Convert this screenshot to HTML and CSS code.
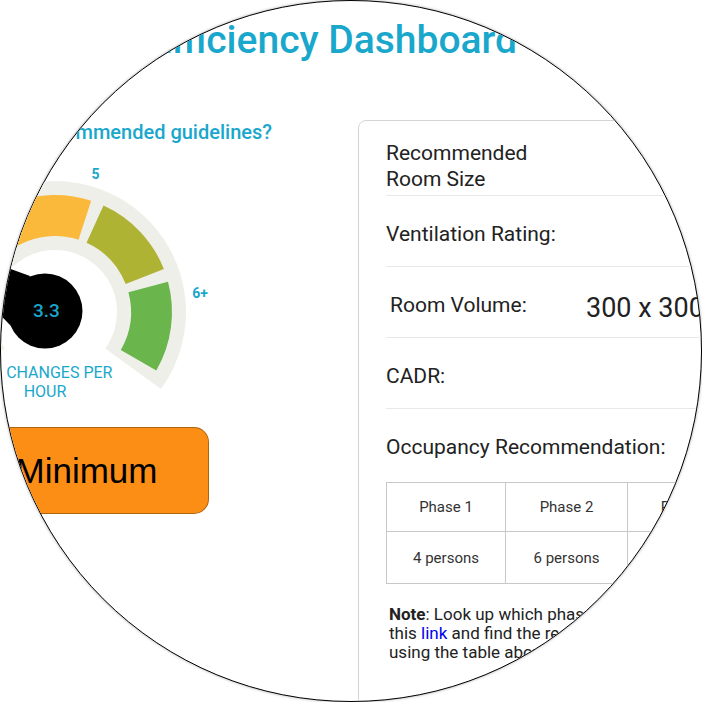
FILE: index.html
```html
<!DOCTYPE html>
<html>
<head>
    <link rel="stylesheet" href="styles.css">
</head>
<body>
<div class="lens">
    <div class="page">
        <h1 class="title">Ventilation Efficiency Dashboard</h1>

        <div class="main">
            <div class="gauge-col">
                <h2 class="question">Does your room meet the recommended guidelines?</h2>

                <svg class="gauge" viewBox="-113 160 340 245" width="340" height="245">
                    <path class="track" d="M-51 389A131 131 0 1 1 161 389L105.2 348.4A62 62 0 1 0 4.8 348.4Z"/>
                    <path class="seg-red" d="M-46.3 370.5A117 117 0 0 1 -52.3 265.4L-14.7 281.7A76 76 0 0 0 -10.8 350Z"/>
                    <path class="seg-orange" d="M-46.3 253.5A117 117 0 0 1 91.2 200.7L78.5 239.7A76 76 0 0 0 -10.8 274Z"/>
                    <path class="seg-olive" d="M103.5 205.5A117 117 0 0 1 163.9 269.1L125.7 284.1A76 76 0 0 0 86.5 242.8Z"/>
                    <path class="seg-green" d="M168 281.7A117 117 0 0 1 156.3 370.5L120.8 350A76 76 0 0 0 128.4 292.3Z"/>
                    <polygon class="needle" points="-75,238 30,276 10,325"/>
                    <circle class="needle" cx="45" cy="311" r="37.5"/>
                    <text class="gauge-value" x="46.5" y="317">3.3</text>
                    <text class="gauge-tick" x="95.5" y="179">5</text>
                    <text class="gauge-tick" x="200" y="298">6+</text>
                    <text class="gauge-caption"><tspan x="45" y="378">AIR CHANGES PER</tspan><tspan x="45" y="397">HOUR</tspan></text>
                </svg>

                <div class="rating">Minimum</div>
            </div>

            <div class="card">
                <div class="row row-first">
                    <div class="label">Recommended<br>Room Size</div>
                    <div class="value"></div>
                </div>
                <div class="row">
                    <div class="label">Ventilation Rating:</div>
                    <div class="value"></div>
                </div>
                <div class="row">
                    <div class="label label-indent">Room Volume:</div>
                    <div class="value">300 x 300 x 250 cm</div>
                </div>
                <div class="row">
                    <div class="label">CADR:</div>
                    <div class="value"></div>
                </div>
                <div class="row row-plain">
                    <div class="label">Occupancy Recommendation:</div>
                </div>

                <table class="phases">
                    <colgroup>
                        <col style="width:119px">
                        <col style="width:122px">
                        <col style="width:120px">
                        <col style="width:120px">
                    </colgroup>
                    <tr class="phase-head">
                        <td>Phase 1</td>
                        <td>Phase 2</td>
                        <td>Phase 3</td>
                        <td>Phase 4</td>
                    </tr>
                    <tr class="phase-count">
                        <td>4 persons</td>
                        <td>6 persons</td>
                        <td>8 persons</td>
                        <td>10 persons</td>
                    </tr>
                </table>

                <p class="note"><b>Note</b>: Look up which phase your state is in from<br>this <a href="#">link</a> and find the recommended occupancy<br>using the table above.</p>
            </div>
        </div>
    </div>
</div>
</body>
</html>
```

FILE: styles.css
```css
body {
    margin: 0;
    font-family: Roboto, "Liberation Sans", sans-serif;
    color: #222;
}
.lens {
    width: 700px;
    height: 700px;
    border: 1px solid #000;
    border-radius: 50%;
    overflow: hidden;
    background: #fff;
    box-shadow: 0 0 3px rgba(0, 0, 0, .35);
}
.page {
    margin-left: -160px;
    width: 1200px;
    padding-top: 16px;
}
.title {
    margin: 0;
    width: 676px;
    text-align: right;
    font-size: 39px;
    line-height: 46px;
    font-weight: 500;
    color: #19a7cc;
}
.main {
    display: flex;
    align-items: flex-start;
    gap: 28px;
    padding-top: 57px;
}
.gauge-col {
    flex: none;
    width: 489px;
}
.question {
    margin: 0;
    padding-right: 58px;
    display: flex;
    justify-content: flex-end;
    white-space: nowrap;
    font-size: 20px;
    line-height: 24px;
    font-weight: 500;
    color: #19a7cc;
}
.gauge {
    display: block;
    margin: 16px 0 0 46px;
}
.gauge text {
    font-family: Roboto, sans-serif;
    fill: #19a7cc;
    text-anchor: middle;
}
.track { fill: #efefea; }
.seg-red { fill: #ea5a3a; }
.seg-orange { fill: #fbb93b; }
.seg-olive { fill: #aeb334; }
.seg-green { fill: #6ab54c; }
.needle { fill: #000; }
.gauge-value {
    font-size: 19px;
    font-weight: 500;
}
.gauge-tick {
    font-size: 14px;
    font-weight: 700;
}
.gauge-caption {
    font-size: 16px;
}
.rating {
    margin: 22px 0 0 123px;
    width: 245px;
    height: 87px;
    box-sizing: border-box;
    border: 1px solid rgba(0, 0, 0, .3);
    border-radius: 15px;
    background: #fc8e15;
    display: flex;
    align-items: center;
    justify-content: center;
    font-family: "Liberation Sans", Arial, sans-serif;
    font-size: 35px;
    color: #000;
}
.card {
    flex: none;
    width: 600px;
    min-height: 640px;
    border: 1px solid #d4d4d4;
    border-radius: 8px;
    padding: 0 27px;
}
.row {
    display: flex;
    align-items: flex-start;
    height: 71px;
    box-sizing: border-box;
    padding-top: 25px;
    border-bottom: 1px solid #e8e8e8;
    font-size: 21px;
    line-height: 26px;
}
.row-first {
    height: 75px;
    padding-top: 19px;
}
.row-plain {
    height: auto;
    border-bottom: none;
}
.label {
    flex: none;
    width: 200px;
}
.label-indent {
    box-sizing: border-box;
    padding-left: 4px;
}
.row-plain .label {
    width: auto;
}
.value {
    font-size: 27px;
    line-height: 32px;
    white-space: nowrap;
}
.phases {
    margin-top: 22px;
    border-collapse: collapse;
    table-layout: fixed;
    font-size: 15px;
    color: #333;
}
.phases td {
    padding: 0;
    border: 1px solid #c8c8c8;
    text-align: center;
}
.phase-head td { height: 48px; }
.phase-count td { height: 51px; }
.note {
    margin: 21px 0 0;
    padding-left: 3px;
    font-size: 17px;
    line-height: 19px;
}
.note a {
    color: #0000ee;
    text-decoration: none;
}
```
